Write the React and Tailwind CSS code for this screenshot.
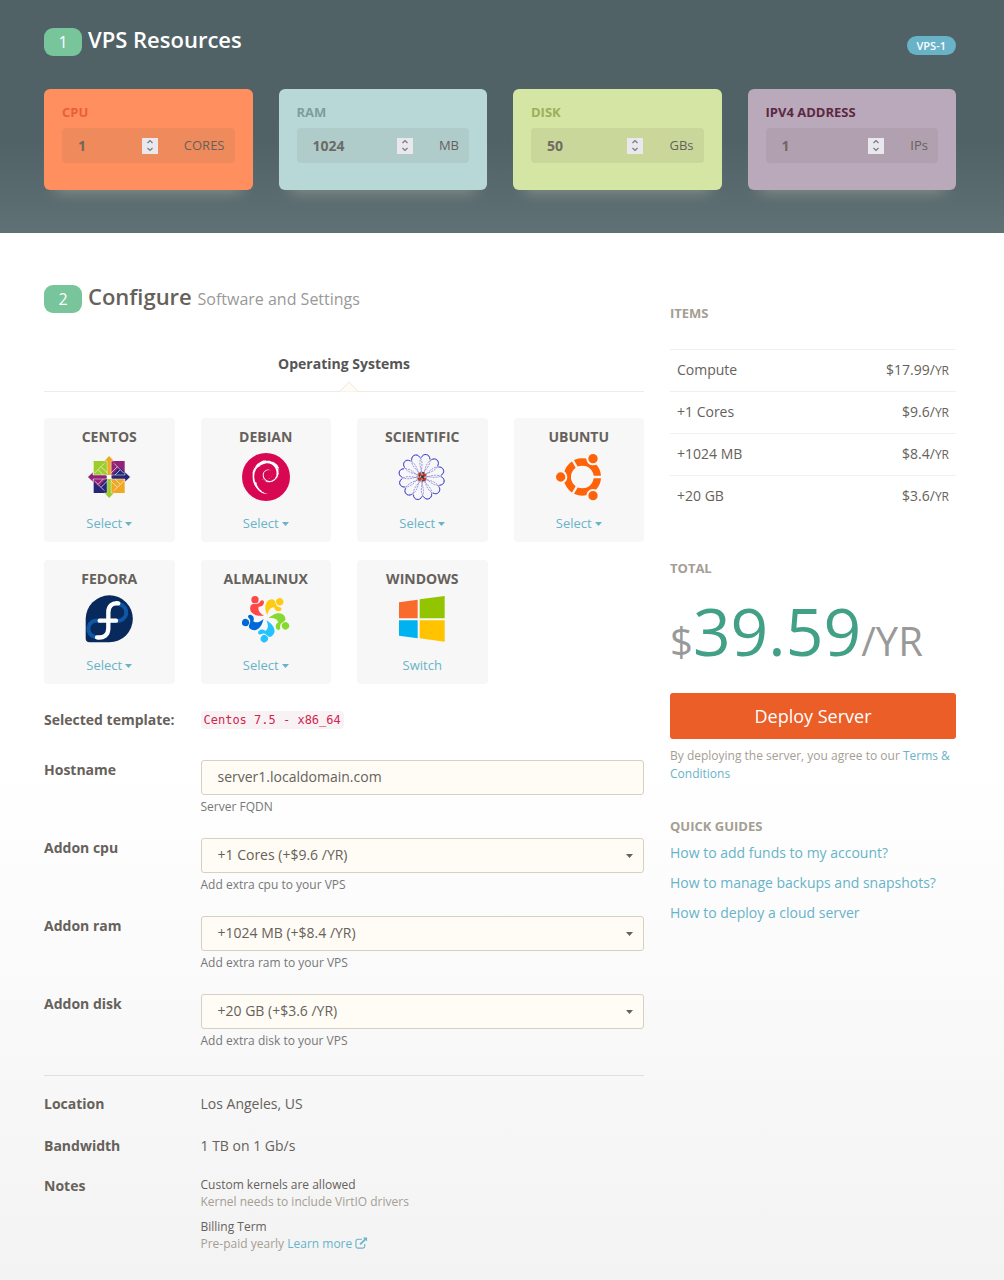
import React from "react";
import { SiDebian } from "react-icons/si";

const resources = [
  { id: "cpu", label: "CPU", value: 1, unit: "CORES", card: "bg-[#ff8f5e]", title: "text-[#eb5f35]" },
  { id: "ram", label: "RAM", value: 1024, unit: "MB", card: "bg-[#b8d8d8]", title: "text-[#7a9e9f]" },
  { id: "disk", label: "DISK", value: 50, unit: "GBs", card: "bg-[#d5e5a3]", title: "text-[#9caf5a]" },
  { id: "ip", label: "IPV4 ADDRESS", value: 1, unit: "IPs", card: "bg-[#baa9ba]", title: "text-[#5b2841]" },
];

const items = [
  ["Compute", "$17.99/"],
  ["+1 Cores", "$9.6/"],
  ["+1024 MB", "$8.4/"],
  ["+20 GB", "$3.6/"],
];

const addons = [
  { id: "cpu", label: "Addon cpu", option: "+1 Cores (+$9.6 /YR)", help: "Add extra cpu to your VPS" },
  { id: "ram", label: "Addon ram", option: "+1024 MB (+$8.4 /YR)", help: "Add extra ram to your VPS" },
  { id: "disk", label: "Addon disk", option: "+20 GB (+$3.6 /YR)", help: "Add extra disk to your VPS" },
];

function CentosLogo() {
  return (
    <svg viewBox="136 129 144 144" className="size-12" aria-hidden="true">
      <path fill="#9ccd2a" d="M162 153h43v43h-43z" />
      <path fill="#932279" d="M212 153h43v43h-43z" />
      <path fill="#262577" d="M162 206h43v43h-43z" />
      <path fill="#efa724" d="M212 206h43v43h-43z" />
      <path fill="#262577" d="M216 196l24-24 15 15v9z" />
      <path fill="#932279" d="M201 206l-24 24-15-15v-9z" />
      <g fill="none" stroke="#f7f7f7" strokeWidth="2">
        <path d="M208 194l-24-24-9 9 24 24M209 194l24-24 9 9-24 24M208 208l-24 24-9-9 24-24M209 208l24 24 9-9-24-24" />
        <path d="M184 170l10-10M175 179l-10 10M233 170l-10-10M242 179l10 10M184 232l10 10M175 223l-10-10M233 232l-10 10M242 223l10-10" />
      </g>
      <g stroke="#f7f7f7" strokeWidth="1.500">
        <path fill="#efa724" d="M208.500 137l15 16h-9v42l-6 4-6-4v-42h-9z" />
        <path fill="#9ccd2a" d="M208.500 265l15-16h-9v-42l-6-4-6 4v42h-9z" />
        <path fill="#932279" d="M144 201l16-15v9h38l6 6-6 6h-38v9z" />
        <path fill="#262577" d="M272 201l-16-15v9h-38l-6 6 6 6h38v9z" />
      </g>
      <circle cx="208.500" cy="201" r="7" fill="#fff" />
    </svg>
  );
}

function DebianLogo() {
  return (
    <span className="flex size-12 items-center justify-center rounded-full bg-[#d70751] text-white">
      <SiDebian size={34} aria-hidden="true" />
    </span>
  );
}

const petals = [0, 30, 60, 90, 120, 150, 180, 210, 240, 270, 300, 330];

function ScientificLogo() {
  return (
    <svg viewBox="145 129 144 144" className="size-12" aria-hidden="true">
      <g fill="none">
        {petals.map((a) => (
          <g key={a} transform={`rotate(${a + 12} 216 201)`}>
            <path d="M216 190C200 166 199 152 203 142c5-12 21-12 26 0 4 10 3 24-13 48z" stroke="#7474dc" strokeWidth="2" strokeDasharray="6 3" />
            <path d="M203 144c2-8 7-12 13-12 7 0 11 4 13 12" stroke="#3a3ac8" strokeWidth="2.500" />
          </g>
        ))}
      </g>
      <circle cx="217" cy="201" r="16" fill="#b9b4b4" />
      <path fill="#c9302c" d="M206 190l8-3 2 10-9 2zM221 188l9 6-4 7-8-4zM203 204l10-2 3 8-8 4zM220 203l10 2-3 9-9-3z" />
      <path fill="#3b3536" d="M215 196l8 1-1 9-8-1zM206 197l5-2v6zM225 211l-8 4v-4zM225 187l-8-1 2 6z" />
    </svg>
  );
}

function UbuntuLogo() {
  return (
    <svg viewBox="613 129 144 144" className="size-12" aria-hidden="true">
      <circle cx="695" cy="201" r="45" fill="none" stroke="#ff6309" strokeWidth="22" />
      <path d="M695 201h60M695 201l-30-52M695 201l-30 52" stroke="#f7f7f7" strokeWidth="7" />
      <circle cx="695" cy="201" r="33" fill="#f7f7f7" />
      <g fill="#ff6309" stroke="#f7f7f7" strokeWidth="6">
        <circle cx="630" cy="201" r="17" />
        <circle cx="727" cy="146" r="17" />
        <circle cx="727" cy="257" r="17" />
      </g>
    </svg>
  );
}

function FedoraLogo() {
  return (
    <svg viewBox="136 554 144 144" className="size-12" aria-hidden="true">
      <path fill="#07295c" d="M209 555a70.500 70.500 0 0 1 0 141h-59a12 12 0 0 1-12-12v-58a71 71 0 0 1 71-71z" />
      <g fill="none" strokeLinecap="round">
        <path stroke="#0f57a5" strokeWidth="12" d="M240 582a25 25 0 0 1-10 49h-24M184 631h-8a25 25 0 0 0-10 49" />
        <path stroke="#fff" strokeWidth="13" d="M236 579c-20-2-30 9-30 27v48c0 20-14 30-34 27M180 631h49" />
      </g>
    </svg>
  );
}

function AlmaLogo() {
  const parts = [
    { angle: 0, color: "#ff4649" },
    { angle: 72, color: "#ffcb12" },
    { angle: 144, color: "#86da2f" },
    { angle: 216, color: "#24c2ff" },
    { angle: 288, color: "#0069da" },
  ];
  return (
    <svg viewBox="606 554 144 144" className="size-12" aria-hidden="true">
      {parts.map((p) => (
        <g key={p.color} fill={p.color} transform={`rotate(${p.angle} 678 622)`}>
          <circle cx="645" cy="568" r="11" />
          <path d="M632 586c2-5 8-6 13-5 8 1 13-2 16-8 3-6 11-4 11 3 0 9-7 14-16 13-3 10 2 19 16 27-18 2-28-2-34-7-8-6-9-15-6-23z" />
        </g>
      ))}
    </svg>
  );
}

function WindowsLogo() {
  return (
    <svg viewBox="145 554 144 144" className="size-12" aria-hidden="true">
      <path fill="#f96a2d" d="M148 576l56-8v56h-56z" />
      <path fill="#92c400" d="M210 567l75-10v67h-75z" />
      <path fill="#00b2f0" d="M148 630h56v54l-56-8z" />
      <path fill="#ffc300" d="M210 630h75v64l-75-10z" />
    </svg>
  );
}

const systems = [
  { name: "CENTOS", Logo: CentosLogo, action: "Select", caret: true },
  { name: "DEBIAN", Logo: DebianLogo, action: "Select", caret: true },
  { name: "SCIENTIFIC", Logo: ScientificLogo, action: "Select", caret: true },
  { name: "UBUNTU", Logo: UbuntuLogo, action: "Select", caret: true },
  { name: "FEDORA", Logo: FedoraLogo, action: "Select", caret: true },
  { name: "ALMALINUX", Logo: AlmaLogo, action: "Select", caret: true },
  { name: "WINDOWS", Logo: WindowsLogo, action: "Switch", caret: false },
];

function Caret({ className }) {
  return (
    <svg viewBox="0 0 7 4" className={className} aria-hidden="true">
      <path d="M0 0h7L3.500 4z" fill="currentColor" />
    </svg>
  );
}

function StepBadge({ children }) {
  return (
    <span className="flex h-7 w-[38px] items-center justify-center rounded-[9px] bg-[#78c49b] text-base text-white">
      {children}
    </span>
  );
}

function ResourceCard({ r }) {
  const [value, setValue] = React.useState(r.value);
  return (
    <div className={`h-[101px] rounded-md px-[18px] pt-[11px] shadow-[0_14px_14px_-12px_rgba(255,240,215,0.3)] ${r.card}`}>
      <label htmlFor={r.id} className={`block text-[13px] leading-6 font-bold ${r.title}`}>
        {r.label}
      </label>
      <div className="mt-1 flex h-[35px] items-center rounded bg-[#66615b]/10 pr-[10px] pl-4 text-[#66615b]">
        <input
          id={r.id}
          type="number"
          value={value}
          onChange={(e) => setValue(Number(e.target.value))}
          className="w-0 min-w-0 flex-1 bg-transparent text-sm font-bold opacity-90 outline-none [appearance:textfield] [&::-webkit-inner-spin-button]:appearance-none"
        />
        <span className="mr-[26px] flex h-4 w-4 shrink-0 flex-col bg-[#e9e9ed] text-[#77777f]">
          <button type="button" aria-label={`More ${r.label}`} onClick={() => setValue(value + 1)} className="flex h-2 items-center justify-center">
            <svg viewBox="0 0 8 5" className="h-[5px] w-2" fill="none" stroke="currentColor" strokeWidth="1.200"><path d="M1.500 4L4 1.500 6.500 4" /></svg>
          </button>
          <button type="button" aria-label={`Less ${r.label}`} onClick={() => setValue(value - 1)} className="flex h-2 items-center justify-center">
            <svg viewBox="0 0 8 5" className="h-[5px] w-2" fill="none" stroke="currentColor" strokeWidth="1.200"><path d="M1.500 1L4 3.500 6.500 1" /></svg>
          </button>
        </span>
        <span className="text-[13px]">{r.unit}</span>
      </div>
    </div>
  );
}

const fieldClass =
  "h-[35px] w-full rounded-[3px] border border-[#d6d0c2] bg-[#fffcf5] px-4 pb-0.5 text-sm text-[#66615b] outline-none";

export default function App() {
  return (
    <div className="min-h-screen bg-[linear-gradient(#ffffff_60%,#f3f3f3)] font-['Open_Sans','Noto_Sans',sans-serif] text-sm text-[#66615b]">
      <header className="bg-[linear-gradient(#506266_60%,#607175)] pt-7 pr-12 pb-[43px] pl-11">
        <div className="flex items-start justify-between">
          <div className="flex gap-[6px]">
            <StepBadge>1</StepBadge>
            <h1 className="text-[22px] leading-[22px] font-semibold text-white">VPS Resources</h1>
          </div>
          <span className="mt-2 rounded-full bg-[#68b3c8] px-[10px] text-[11px] leading-[19px] font-semibold text-white">VPS-1</span>
        </div>
        <div className="mt-[33px] grid grid-cols-4 gap-[26px]">
          {resources.map((r) => (
            <ResourceCard key={r.id} r={r} />
          ))}
        </div>
      </header>

      <main className="grid grid-cols-[minmax(0,600fr)_minmax(0,286fr)] gap-[26px] pt-[52px] pr-12 pb-7 pl-11">
        <section>
          <div className="flex gap-[6px]">
            <StepBadge>2</StepBadge>
            <h2 className="text-[22px] leading-[22px] font-semibold">
              Configure <small className="text-base font-normal text-[#999999]">Software and Settings</small>
            </h2>
          </div>

          <div className="relative mt-[37px] border-b border-[#f0ebe3] pt-0.5 pb-[15px] text-center">
            <h3 className="text-sm leading-6 font-bold text-[#555555]">Operating Systems</h3>
            <svg viewBox="0 0 20 11" className="absolute -bottom-px left-[295px] h-[11px] w-5" aria-hidden="true">
              <path d="M1 10.500L10 1l9 9.500" fill="#fffcf5" stroke="#f0e6da" />
            </svg>
          </div>

          <div className="mt-[26px] grid grid-cols-4 gap-x-[26px] gap-y-[18px]">
            {systems.map(({ name, Logo, action, caret }) => (
              <div key={name} className="flex h-[124px] flex-col items-center rounded bg-[#f7f7f7] pt-2">
                <h4 className="text-sm leading-[22px] font-bold">{name}</h4>
                <div className="mt-[5px]">
                  <Logo />
                </div>
                <button type="button" className="mt-3 flex items-center gap-[3px] text-[13px] leading-5 text-[#68b3c8]">
                  {action}
                  {caret && <Caret className="mt-0.5 h-1 w-[7px]" />}
                </button>
              </div>
            ))}
          </div>

          <div className="mt-6 grid grid-cols-4 gap-x-[26px]">
            <span className="leading-6 font-bold whitespace-nowrap">Selected template:</span>
            <div className="col-span-3 flex items-center">
              <code className="rounded bg-[#f9f2f4] px-[3px] font-['DejaVu_Sans_Mono',monospace] text-xs leading-[18px] text-[#d0254f]">
                Centos 7.5 - x86_64
              </code>
            </div>
          </div>

          <form className="mt-7 flex flex-col gap-[22px]">
            <div className="grid grid-cols-4 gap-x-[26px]">
              <label htmlFor="hostname" className="self-start leading-5 font-bold">Hostname</label>
              <div className="col-span-3">
                <input id="hostname" type="text" defaultValue="server1.localdomain.com" className={fieldClass} />
                <p className="mt-[3px] text-xs leading-[18px] text-[#777777]">Server FQDN</p>
              </div>
            </div>
            {addons.map((a) => (
              <div key={a.id} className="grid grid-cols-4 gap-x-[26px]">
                <label htmlFor={`addon-${a.id}`} className="self-start leading-5 font-bold">{a.label}</label>
                <div className="col-span-3">
                  <div className="relative">
                    <select id={`addon-${a.id}`} className={`appearance-none ${fieldClass}`}>
                      <option>{a.option}</option>
                    </select>
                    <Caret className="pointer-events-none absolute top-4 right-[11px] h-1 w-[7px]" />
                  </div>
                  <p className="mt-[3px] text-xs leading-[18px] text-[#777777]">{a.help}</p>
                </div>
              </div>
            ))}
          </form>

          <hr className="mt-[25px] border-[#e0e0e0]" />

          <dl className="mt-4 grid grid-cols-4 gap-x-[26px] gap-y-[18px] leading-6">
            <dt className="font-bold">Location</dt>
            <dd className="col-span-3">Los Angeles, US</dd>
            <dt className="font-bold">Bandwidth</dt>
            <dd className="col-span-3">1 TB on 1 Gb/s</dd>
            <dt className="-mt-0.5 font-bold">Notes</dt>
            <dd className="col-span-3 text-xs leading-[17px]">
              <p>Custom kernels are allowed</p>
              <p className="text-[#a49e93]">Kernel needs to include VirtIO drivers</p>
              <p className="mt-2">Billing Term</p>
              <p className="text-[#a49e93]">
                Pre-paid yearly{" "}
                <a href="#billing" className="text-[#68b3c8]">
                  Learn more{" "}
                  <svg viewBox="0 0 14 12" className="inline h-3 w-[13px] align-[-1px]" aria-hidden="true">
                    <path d="M7.500 2H3a2 2 0 0 0-2 2v5.500a2 2 0 0 0 2 2h5.500a2 2 0 0 0 2-2V7" fill="none" stroke="currentColor" strokeWidth="1.200" />
                    <path d="M5.500 7.500L11 2" fill="none" stroke="currentColor" strokeWidth="1.800" />
                    <path d="M8.500 0H13v4.500z" fill="currentColor" />
                  </svg>
                </a>
              </p>
            </dd>
          </dl>
        </section>

        <aside>
          <h3 className="mt-[18px] text-[13px] leading-5 font-bold text-[#a49e93]">ITEMS</h3>
          <table className="mt-[26px] w-full">
            <tbody>
              {items.map(([name, price]) => (
                <tr key={name} className="h-[42px] border-t border-[#f0f0f0]">
                  <td className="pb-0.5 pl-[7px]">{name}</td>
                  <td className="pr-[7px] pb-0.5 text-right">
                    {price}
                    <small className="text-xs">YR</small>
                  </td>
                </tr>
              ))}
            </tbody>
          </table>

          <h3 className="mt-10 text-[13px] leading-5 font-bold text-[#a49e93]">TOTAL</h3>
          <p className="mt-3 text-[40px] leading-[80px] whitespace-nowrap text-[#999999]">
            $<span className="text-[66px] text-[#41a085]">39.59</span>/YR
          </p>
          <button type="button" className="mt-3 h-[46px] w-full rounded-[3px] bg-[#eb5e28] text-lg text-white">
            Deploy Server
          </button>
          <p className="mt-2 text-xs leading-[18px] text-[#a49e93]">
            By deploying the server, you agree to our{" "}
            <a href="#terms" className="text-[#68b3c8]">Terms &amp; Conditions</a>
          </p>

          <h3 className="mt-[33px] text-[13px] leading-5 font-bold text-[#a49e93]">QUICK GUIDES</h3>
          <ul className="mt-[7px] flex flex-col gap-[10px] text-[#68b3c8]">
            <li className="leading-5"><a href="#funds">How to add funds to my account?</a></li>
            <li className="leading-5"><a href="#backups">How to manage backups and snapshots?</a></li>
            <li className="leading-5"><a href="#deploy">How to deploy a cloud server</a></li>
          </ul>
        </aside>
      </main>
    </div>
  );
}
